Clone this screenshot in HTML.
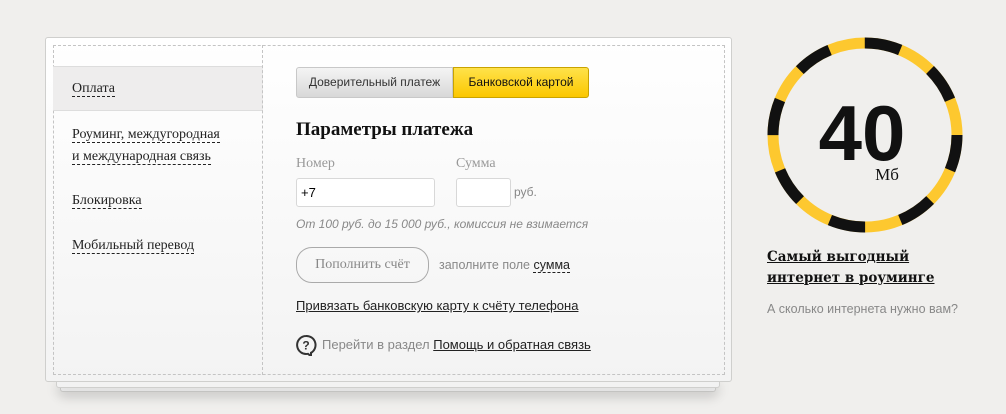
<!DOCTYPE html>
<html><head><meta charset="utf-8"><style>
*{margin:0;padding:0;box-sizing:border-box}
body{width:1006px;height:414px;background:#f0efed;font-family:"Liberation Sans",sans-serif;position:relative;overflow:hidden}
.sh{position:absolute;left:60px;width:656px;height:10px;border:1px solid #cfcfcd;border-top:none;background:#f2f2f2;border-radius:0 0 3px 3px;box-shadow:0 6px 12px rgba(0,0,0,.1)}
.card{position:absolute;left:45px;top:37px;width:687px;height:345px;background:linear-gradient(#fff,#f3f3f3);border:1px solid #cfcfcd;border-radius:3px}
.dash{position:absolute;left:7px;top:7px;right:6px;bottom:6px;border:1px dashed #c4c4c4}
.vl{position:absolute;left:216px;top:7px;bottom:6px;border-left:1px dashed #c4c4c4}
.sel{position:absolute;left:7px;top:28px;width:210px;height:45px;background:#eeeded;border-top:1px solid #ddd;border-bottom:1px solid #ddd}
.m{position:absolute;left:26px;font-family:"Liberation Serif",serif;font-size:14px;color:#222;line-height:22px}
.m span{border-bottom:1px dashed #222}
.a{position:absolute}
.tabs{left:250px;top:29px;height:31px;display:flex;font-size:12px}
.t1{width:157px;border:1px solid #c8c8c8;border-radius:3px 0 0 3px;background:linear-gradient(#f4f4f4,#d8d8d8);color:#333;text-align:center;line-height:29px}
.t2{width:136px;border:1px solid #c9a300;border-radius:0 3px 3px 0;background:linear-gradient(#ffe24a,#fbc700);color:#111;text-align:center;line-height:29px}
h2{position:absolute;left:250px;top:81px;font-family:"Liberation Serif",serif;font-size:19px;font-weight:bold;color:#111}
.lb{font-family:"Liberation Serif",serif;color:#999;font-size:14px}
.in{border:1px solid #d8d8d8;border-radius:3px;background:#fff;height:29px}
</style></head><body>
<div class="sh" style="top:380px;height:12px"></div>
<div class="sh" style="top:378px;left:56px;width:664px;height:10px"></div>
<div class="card">
<div class="dash"></div><div class="sel"></div><div class="vl"></div>
<div class="m" style="top:40px"><span>Оплата</span></div>
<div class="m" style="top:86px"><span>Роуминг, междугородная</span><br><span>и международная связь</span></div>
<div class="m" style="top:152px"><span>Блокировка</span></div>
<div class="m" style="top:197px"><span>Мобильный перевод</span></div>
<div class="a tabs"><div class="t1">Доверительный платеж</div><div class="t2">Банковской картой</div></div>
<h2>Параметры платежа</h2>
<div class="a lb" style="left:250px;top:118px">Номер</div>
<div class="a lb" style="left:410px;top:118px">Сумма</div>
<div class="a in" style="left:250px;top:140px;width:139px;font-size:13px;line-height:27px;padding-left:4px">+7</div>
<div class="a in" style="left:410px;top:140px;width:55px"></div>
<div class="a" style="left:468px;top:147px;font-size:12px;color:#888">руб.</div>
<div class="a" style="left:250px;top:179px;font-size:12px;font-style:italic;color:#888">От 100 руб. до 15 000 руб., комиссия не взимается</div>
<div class="a" style="left:250px;top:209px;width:133px;height:36px;border:1px solid #aaa;border-radius:16px;font-family:'Liberation Serif',serif;font-size:14px;color:#888;text-align:center;line-height:34px">Пополнить счёт</div>
<div class="a" style="left:393px;top:220px;font-size:12.5px;color:#888">заполните поле <span style="color:#222;border-bottom:1px dashed #222">сумма</span></div>
<div class="a" style="left:250px;top:260px;font-size:13px;color:#222;text-decoration:underline">Привязать банковскую карту к счёту телефона</div>
<svg class="a" style="left:249px;top:296px" width="22" height="22" viewBox="0 0 22 22"><path d="M11 2a9 9 0 1 0 2 17.8l3 2.5v-3.5A9 9 0 0 0 11 2z" fill="none" stroke="#333" stroke-width="2"/><text x="11" y="15.5" font-size="12" font-weight="bold" text-anchor="middle" font-family="Liberation Sans" fill="#333">?</text></svg>
<div class="a" style="left:276px;top:299px;font-size:13px;color:#888">Перейти в раздел <span style="color:#222;text-decoration:underline">Помощь и обратная связь</span></div>
</div>
<svg class="a" style="left:760px;top:30px" width="210" height="210" viewBox="0 0 210 210">
<circle cx="105" cy="105" r="92" fill="none" stroke="#fdc82f" stroke-width="11"/>
<circle cx="105" cy="105" r="92" fill="none" stroke="#111" stroke-width="11" stroke-dasharray="36.1 36.1" transform="rotate(-90 105 105)"/>
<text x="102" y="130" font-family="Liberation Sans" font-weight="bold" font-size="78" text-anchor="middle" fill="#111">40</text>
<text x="127" y="150" font-family="Liberation Serif" font-size="17" text-anchor="middle" fill="#111">Мб</text>
</svg>
<div class="a" style="left:767px;top:247px;font-family:'DejaVu Serif',serif;font-weight:bold;font-size:13.5px;line-height:21px;color:#111;text-decoration:underline">Самый выгодный<br>интернет в роуминге</div>
<div class="a" style="left:767px;top:302px;font-size:12.5px;color:#888">А сколько интернета нужно вам?</div>
</body></html>
